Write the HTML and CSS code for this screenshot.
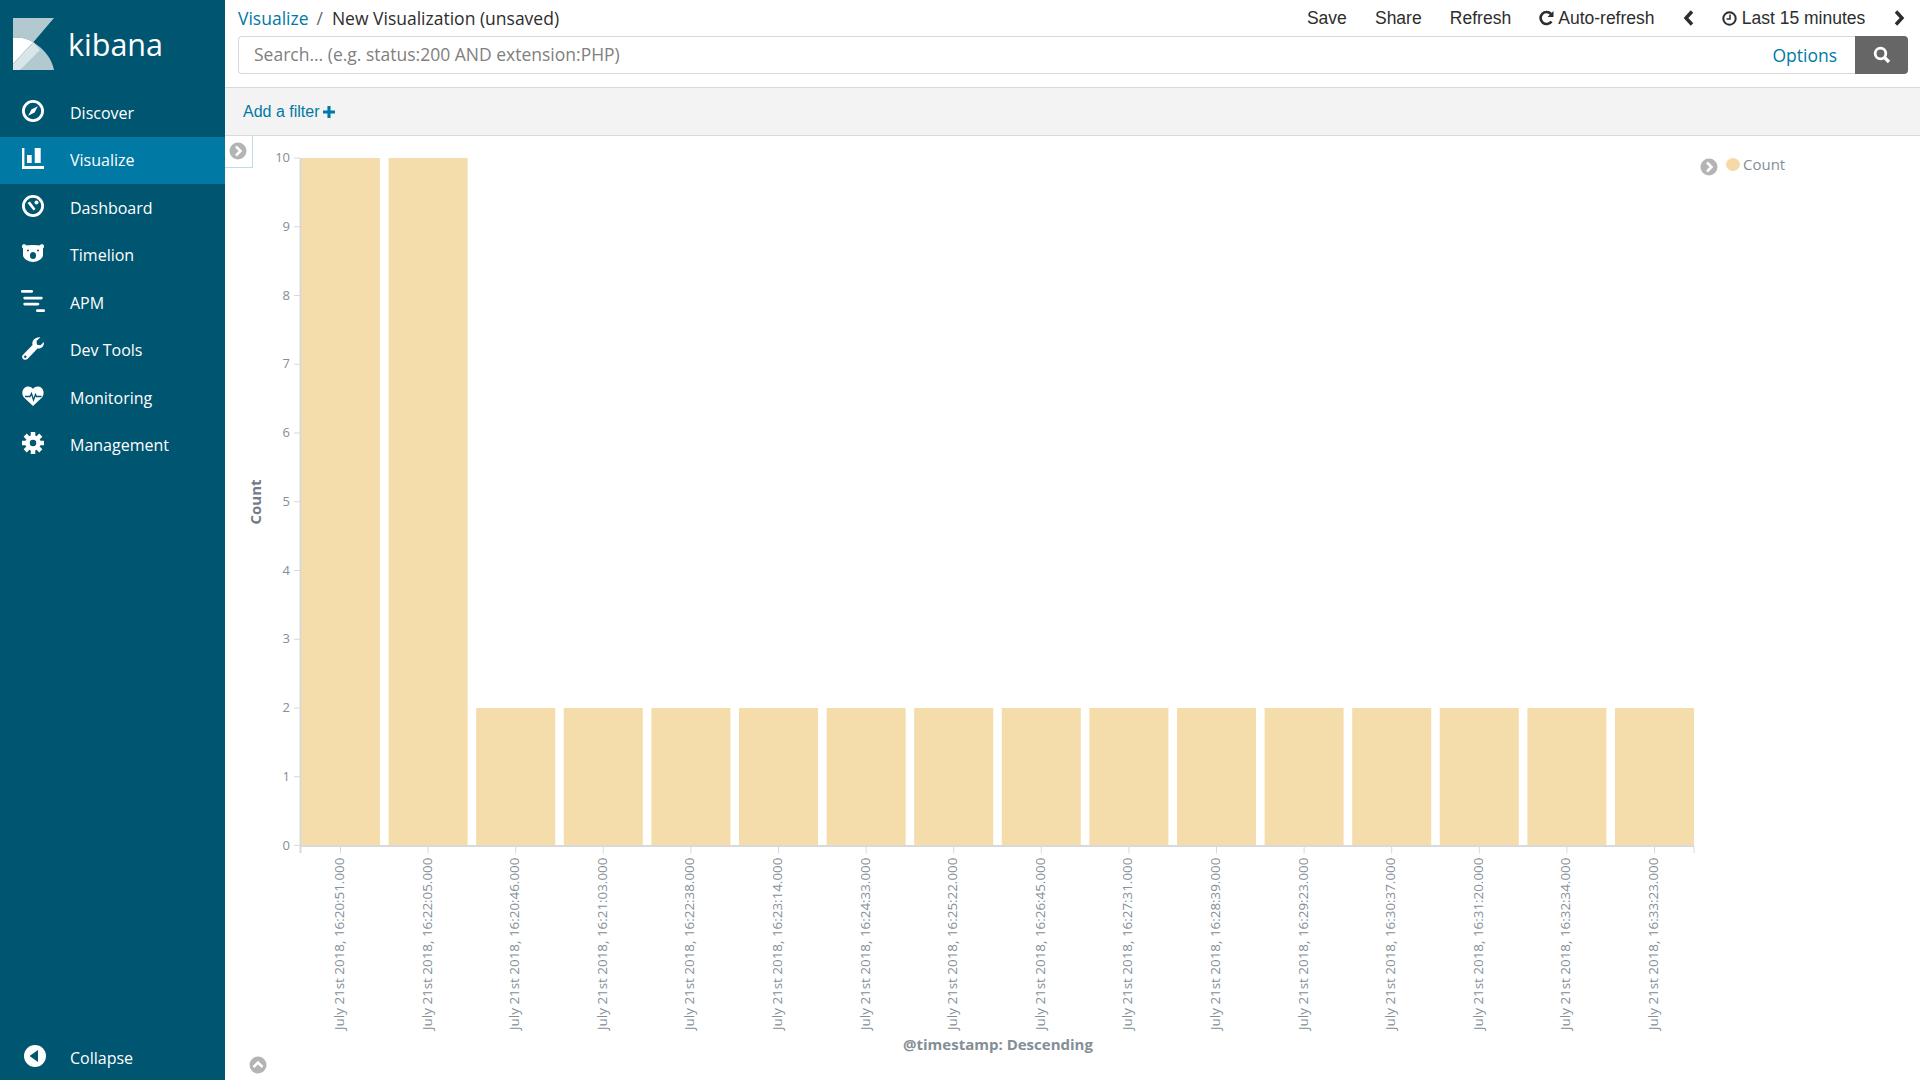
FILE: index.html
```html
<!DOCTYPE html>
<html lang="en">
<head>
	<meta charset="UTF-8">
	<title>New Visualization (unsaved) - Kibana</title>
	<link rel="stylesheet" href="styles.css">
</head>
<body>

	<!-- Sidebar -->
	<nav class="sidebar">
		<div class="logo">
			<svg class="logo-mark" width="41" height="52" viewBox="0 0 41 52">
				<path d="M0 0 H41 L20.300 24.300 C14 20 7 19 0 19.500 Z" fill="#b2c9d0"/>
				<path d="M20.300 24.300 C31 31 39 41 41 52 H7 Z" fill="#b2c9d0"/>
				<path d="M0 19.500 C7 19 14 20 20.300 24.300 L0 46 Z" fill="#fff"/>
				<path d="M20.300 24.300 L27 32 L7 52 H0 V46 Z" fill="#d9e5e8"/>
			</svg>
			<span class="logo-text">kibana</span>
		</div>
		<a class="nav-item" href="#">
			<svg class="nav-icon" width="22" height="22" viewBox="0 0 22 22"><circle cx="11" cy="11" r="9.600" fill="none" stroke="#fff" stroke-width="2.800"/><path d="M15.800 6.200 L12.600 12.600 L6.200 15.800 L9.400 9.400 Z" fill="#fff"/></svg>
			Discover
		</a>
		<a class="nav-item active" href="#">
			<svg class="nav-icon" width="22" height="21" viewBox="0 0 22 21"><path d="M0 0h2.400v18h19.600v3H0z" fill="#fff"/><rect x="5" y="7" width="4.700" height="8" fill="#fff"/><rect x="12.700" y="0" width="6" height="15" fill="#fff"/></svg>
			Visualize
		</a>
		<a class="nav-item" href="#">
			<svg class="nav-icon" width="22" height="22" viewBox="0 0 22 22"><circle cx="11" cy="11" r="9.600" fill="none" stroke="#fff" stroke-width="2.800"/><circle cx="14.500" cy="7.500" r="2" fill="#fff"/><path d="M5.500 8 L8 6.500 L13.500 14 L11.500 15.500 Z" fill="#fff"/></svg>
			Dashboard
		</a>
		<a class="nav-item" href="#">
			<svg class="nav-icon" width="22" height="18" viewBox="0 0 22 18"><path d="M0 2 C0 0 3 -.5 4.500 1.500 C8 .8 14 .8 17.500 1.500 C19 -.5 22 0 22 2 C22 3.500 21.500 4 21 4.500 V11 C21 15 15 18 11 18 C7 18 1 15 1 11 V4.500 C.5 4 0 3.500 0 2Z" fill="#fff"/><ellipse cx="11" cy="11.500" rx="3" ry="3.500" fill="#005571"/><circle cx="6" cy="6.500" r="1" fill="#005571"/><circle cx="16" cy="6.500" r="1" fill="#005571"/></svg>
			Timelion
		</a>
		<a class="nav-item" href="#">
			<svg class="nav-icon" width="22" height="22" viewBox="0 0 22 22" fill="#fff"><rect x="-1" y="0" width="12" height="2.700" rx="1.300"/><rect x="1.300" y="6.700" width="19.400" height="2.700" rx="1.300"/><rect x="1.300" y="12.700" width="16" height="2.700" rx="1.300"/><rect x="14" y="19.300" width="9" height="2.700" rx="1.300"/></svg>
			APM
		</a>
		<a class="nav-item" href="#">
			<svg class="nav-icon" width="22" height="23" viewBox="0 0 22 23"><path d="M21.800 5 C22.500 9 19 12.300 15.500 11.500 L5.500 22 C3.500 23.800 -.8 22.300 .3 18.500 L10.500 8 C9.500 3.500 13.500 -.5 18.500 .3 L14.500 4 L15 7.800 L18.500 8.300 Z" fill="#fff"/><circle cx="3.300" cy="19.700" r="1.200" fill="#005571"/></svg>
			Dev Tools
		</a>
		<a class="nav-item" href="#">
			<svg class="nav-icon" width="22" height="20" viewBox="0 0 22 20"><path d="M11 20 L2 11.500 C-1 8 0 1.500 5.500 .5 C8 .2 10 1.500 11 3 C12 1.500 14 .2 16.500 .5 C22 1.500 23 8 20 11.500 Z" fill="#fff"/><path d="M3 10.500 H8 L9.500 7.500 L11.500 14 L13.500 8.500 L14.500 10.500 H19.500" fill="none" stroke="#005571" stroke-width="1.300"/></svg>
			Monitoring
		</a>
		<a class="nav-item" href="#">
			<svg class="nav-icon" width="22" height="22" viewBox="0 0 22 22"><circle cx="11" cy="11" r="5.500" fill="none" stroke="#fff" stroke-width="4.500"/><g stroke="#fff" stroke-width="4.500"><path d="M11 0v4M11 18v4M0 11h4M18 11h4M3.200 3.200l2.800 2.800M16 16l2.800 2.800M3.200 18.800L6 16M16 6l2.800-2.800"/></g></svg>
			Management
		</a>
		<a class="nav-item collapse" href="#">
			<svg class="nav-icon" width="22" height="22" viewBox="0 0 22 22"><circle cx="11" cy="11" r="11" fill="#fff"/><path d="M5.500 11 L14 5 V17 Z" fill="#005571"/></svg>
			Collapse
		</a>
	</nav>

	<div class="main">

		<!-- Top bar -->
		<div class="topbar">
			<div class="topbar-row">
				<div class="crumbs">
					<a href="#">Visualize</a><span class="crumb-sep">/</span><span class="crumb-current">New Visualization (unsaved)</span>
				</div>
				<div class="top-menu">
					<span>Save</span>
					<span>Share</span>
					<span>Refresh</span>
					<span>
						<svg width="15" height="16" viewBox="0 0 15 16"><path d="M12.500 11.500 A6 6 0 1 1 12 4" fill="none" stroke="#2d2d2d" stroke-width="2.600"/><path d="M14.500 1 V7 H8.500 Z" fill="#2d2d2d"/></svg>
						Auto-refresh
					</span>
					<svg width="11" height="16" viewBox="0 0 11 16"><path d="M9 1.500 L3 8 L9 14.500" fill="none" stroke="#2d2d2d" stroke-width="3.400"/></svg>
					<span>
						<svg width="15" height="15" viewBox="0 0 15 15"><circle cx="7.500" cy="7.500" r="6.200" fill="none" stroke="#2d2d2d" stroke-width="2"/><path d="M8 3.500 V8 H4.500" fill="none" stroke="#2d2d2d" stroke-width="1.500"/></svg>
						Last 15 minutes
					</span>
					<svg width="11" height="16" viewBox="0 0 11 16"><path d="M2 1.500 L8 8 L2 14.500" fill="none" stroke="#2d2d2d" stroke-width="3.400"/></svg>
				</div>
			</div>
			<div class="search-bar">
				<div class="search-input">
					<span class="placeholder">Search... (e.g. status:200 AND extension:PHP)</span>
					<a class="options" href="#">Options</a>
				</div>
				<button class="search-btn" type="button">
					<svg width="18" height="18" viewBox="0 0 18 18"><circle cx="7.500" cy="7.500" r="5.300" fill="none" stroke="#fff" stroke-width="2.800"/><path d="M11.500 11.500 L16 16" stroke="#fff" stroke-width="3.400"/></svg>
				</button>
			</div>
		</div>

		<!-- Filter bar -->
		<div class="filter-bar">
			<a href="#">Add a filter</a>
			<svg width="12" height="12" viewBox="0 0 13 13"><path d="M4.800 0h3.400v4.800h4.800v3.400H8.200v4.800H4.800V8.200H0V4.800h4.800z" fill="#0079a5"/></svg>
		</div>

		<!-- Chart -->
		<div class="vis">
			<div class="sidebar-toggle">
				<svg width="18" height="18" viewBox="0 0 18 18"><circle cx="9" cy="9" r="8.500" fill="#b4b4b4"/><path d="M7 4.500 L11.500 9 L7 13.500" fill="none" stroke="#fff" stroke-width="2.500"/></svg>
			</div>
			<svg class="chart" id="chart" width="1695" height="944" viewBox="225 136 1695 944"></svg>
			<svg class="spy-toggle" width="18" height="18" viewBox="0 0 18 18"><circle cx="9" cy="9" r="8.500" fill="#b4b4b4"/><path d="M4.500 11 L9 6.500 L13.500 11" fill="none" stroke="#fff" stroke-width="2.500"/></svg>
			<div class="legend">
				<svg width="18" height="18" viewBox="0 0 18 18"><circle cx="9" cy="9" r="8.500" fill="#b4b4b4"/><path d="M7 4.500 L11.500 9 L7 13.500" fill="none" stroke="#fff" stroke-width="2.500"/></svg>
				<span class="legend-dot"></span>
				<span class="legend-label">Count</span>
			</div>
		</div>
	</div>

	<script src="chart.js"></script>
</body>
</html>
```

FILE: styles.css
```css
* {
	box-sizing: border-box;
}
html, body {
	height: 100%;
}
body {
	font-family: "Open Sans", Arial, sans-serif;
	margin: 0;
	padding: 0;
	background-color: #fff;
	display: flex;
	overflow: hidden;
	color: #2d2d2d;
}
a {
	text-decoration: none;
}

/* Sidebar */
.sidebar {
	width: 225px;
	height: 1080px;
	flex: none;
	background-color: #005571;
	display: flex;
	flex-direction: column;
}
.logo {
	height: 89px;
	padding: 18px 0 0 13px;
	display: flex;
	align-items: flex-start;
}
.logo-text {
	color: #fff;
	font-size: 30.500px;
	line-height: 52px;
	margin-left: 14px;
}
.nav-item {
	height: 47.500px;
	padding-left: 22px;
	display: flex;
	align-items: center;
	color: #fff;
	font-size: 16px;
}
.nav-icon {
	flex: none;
	margin-right: 26px;
	margin-bottom: 4px;
	overflow: visible;
}
.nav-item.active {
	background-color: #0079a5;
}
.nav-item.collapse {
	margin-top: auto;
	margin-bottom: -2px;
}
.nav-item.collapse .nav-icon {
	margin-left: 2px;
	margin-right: 24px;
}

/* Top bar */
.main {
	flex: 1;
	min-width: 0;
	display: flex;
	flex-direction: column;
}
.topbar {
	height: 88px;
	padding: 0 12px 0 13px;
	border-bottom: 1px solid #d9d9d9;
}
.topbar-row {
	height: 36px;
	display: flex;
	justify-content: space-between;
	align-items: center;
	font-size: 17.500px;
}
.crumbs a {
	color: #0079a5;
}
.crumb-sep {
	margin: 0 9px 0 8px;
	color: #666;
}
.top-menu {
	display: flex;
	align-items: center;
	gap: 28.200px;
	margin-right: 3.500px;
	font-family: "Liberation Sans", Arial, sans-serif;
}
.top-menu svg {
	vertical-align: -2px;
}
.search-bar {
	height: 38px;
	display: flex;
}
.search-input {
	flex: 1;
	display: flex;
	justify-content: space-between;
	align-items: center;
	padding: 0 18px 1px 15px;
	border: 1px solid #d9d9d9;
	border-right: none;
	border-radius: 4px 0 0 4px;
	font-size: 17.500px;
}
.placeholder {
	color: #808080;
	margin-top: -1px;
}
.options {
	color: #0079a5;
}
.search-btn {
	width: 53px;
	border: none;
	border-radius: 0 4px 4px 0;
	background-color: #666;
	padding: 0;
	display: flex;
	align-items: center;
	justify-content: center;
}

/* Filter bar */
.filter-bar {
	height: 48px;
	padding-left: 18px;
	display: flex;
	align-items: center;
	gap: 4px;
	background-color: #f3f3f3;
	border-bottom: 1px solid #d9d9d9;
	font-family: "Liberation Sans", Arial, sans-serif;
	font-size: 16px;
}
.filter-bar a {
	color: #0079a5;
}

/* Chart */
.vis {
	flex: 1;
	position: relative;
}
.chart {
	display: block;
	font-family: "Open Sans", Arial, sans-serif;
}
.sidebar-toggle {
	position: absolute;
	left: 0;
	top: 0;
	width: 28px;
	height: 32px;
	padding: 6px 0 0 4px;
	border-right: 1px solid #bfdce8;
	border-bottom: 1px solid #bfdce8;
}
.spy-toggle {
	position: absolute;
	left: 24px;
	top: 920px;
}
.legend {
	position: absolute;
	left: 1475px;
	top: 22px;
	display: flex;
	align-items: flex-start;
	font-size: 15px;
	color: #848e96;
}
.legend-dot {
	width: 14px;
	height: 13px;
	margin: 0 3px 0 8px;
	border-radius: 50%;
	background-color: #f5d9a9;
}
.legend-label {
	line-height: 12px;
}
```

FILE: chart.js
```js
// column chart, coordinates are page pixels (see viewBox)
var svg = document.getElementById('chart');
var NS = 'http://www.w3.org/2000/svg';

var stamps = ['16:20:51', '16:22:05', '16:20:46', '16:21:03', '16:22:38', '16:23:14', '16:24:33', '16:25:22',
	'16:26:45', '16:27:31', '16:28:39', '16:29:23', '16:30:37', '16:31:20', '16:32:34', '16:33:23'];
var counts = [10, 10, 2, 2, 2, 2, 2, 2, 2, 2, 2, 2, 2, 2, 2, 2];

var left = 301, step = 87.6, barWidth = 79, bottom = 845.5, unit = 68.75;

function add(tag, attrs, text) {
	var el = document.createElementNS(NS, tag);
	for (var k in attrs) el.setAttribute(k, attrs[k]);
	if (text) el.textContent = text;
	svg.appendChild(el);
	return el;
}

for (var v = 0; v <= 10; v++) {
	var y = bottom - v * unit;
	add('line', { x1: 294, x2: 300, y1: y, y2: y, stroke: '#d9d9d9' });
	add('text', { x: 290, y: y + 4, 'text-anchor': 'end', 'font-size': 13, fill: '#848e96' }, String(v));
}

counts.forEach(function (c, i) {
	var x = left + i * step;
	add('rect', { x: x, y: bottom - c * unit, width: barWidth, height: c * unit, fill: '#f5dcab' });
	var cx = x + barWidth / 2;
	add('line', { x1: cx, x2: cx, y1: bottom, y2: bottom + 8, stroke: '#d9d9d9' });
	add('text', {
		transform: 'translate(' + (cx + 3.5) + ' 1030) rotate(-90)',
		'font-size': 13.4, fill: '#848e96'
	}, 'July 21st 2018, ' + stamps[i] + '.000');
});

add('line', { x1: 300.5, x2: 300.5, y1: 158, y2: 853, stroke: '#d9d9d9', 'stroke-width': 2 });
add('line', { x1: 300, x2: 1694, y1: 846, y2: 846, stroke: '#d9d9d9', 'stroke-width': 2 });
add('line', { x1: 1694, x2: 1694, y1: 846, y2: 853, stroke: '#d9d9d9' });

add('text', {
	transform: 'translate(261 502) rotate(-90)', 'text-anchor': 'middle',
	'font-size': 15, 'font-weight': 700, fill: '#737b88'
}, 'Count');
add('text', {
	x: 998, y: 1050, 'text-anchor': 'middle',
	'font-size': 15, 'font-weight': 700, fill: '#848e96'
}, '@timestamp: Descending');
```
